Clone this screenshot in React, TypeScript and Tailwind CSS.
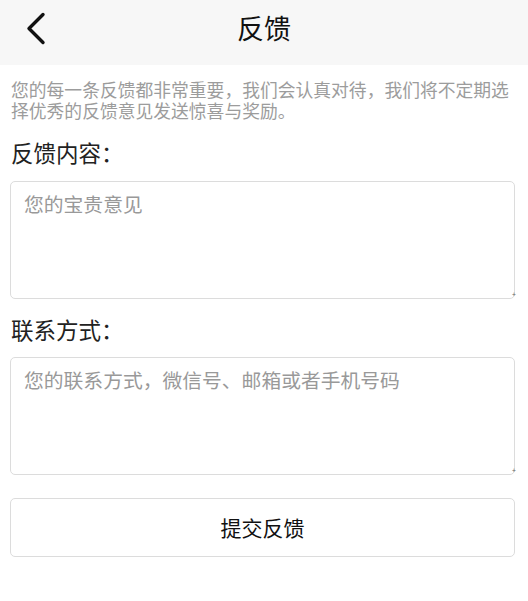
import React from "react";

function Field({ placeholder, className }: { placeholder: string; className: string }) {
  return (
    <div className={"relative " + className}>
      <textarea
        className="block w-[505px] h-[118px] resize-none border border-[#dcdcdc] rounded-[5px] px-[13px] py-[9px] text-[19.8px] leading-[26px] placeholder:text-[#999] outline-none"
        placeholder={placeholder}
      />
      <span className="absolute right-[2px] bottom-[1px] text-[7px] leading-none text-[#666]">+</span>
    </div>
  );
}

export default function App() {
  const font = { fontFamily: '"Noto Sans CJK SC", "Noto Sans", sans-serif' };
  return (
    <div className="w-[528px] h-[601px] bg-white" style={font}>
      <div className="relative h-[65px] bg-[#f7f7f7] flex items-center justify-center">
        <button className="absolute left-[24px] top-[12px] w-[24px] h-[34px] flex items-center justify-center">
          <svg width="22" height="34" viewBox="0 0 22 34" fill="none">
            <path d="M18 2.5 L4 16.5 L18 30.5" stroke="#111" strokeWidth="3.4" strokeLinecap="round" strokeLinejoin="round" />
          </svg>
        </button>
        <h1 className="text-[27px] leading-none text-[#111] -mt-[10px]">反馈</h1>
      </div>
      <div className="px-[10px]">
        <p className="mt-[14px] pl-[1px] text-[17.8px] leading-[21px] text-[#9c9c9c]">
          您的每一条反馈都非常重要，我们会认真对待，我们将不定期选择优秀的反馈意见发送惊喜与奖励。
        </p>
        <div className="mt-[18px] pl-[1px] text-[22.5px] leading-[26px] text-[#222]">反馈内容：</div>
        <Field className="mt-[16px]" placeholder="您的宝贵意见" />
        <div className="mt-[17px] pl-[1px] text-[22.5px] leading-[26px] text-[#222]">联系方式：</div>
        <Field className="mt-[15px]" placeholder="您的联系方式，微信号、邮箱或者手机号码" />
        <button className="mt-[23px] w-[505px] h-[59px] border border-[#dcdcdc] rounded-[5px] bg-white text-[21px] text-[#111] flex items-center justify-center">
          提交反馈
        </button>
      </div>
    </div>
  );
}
